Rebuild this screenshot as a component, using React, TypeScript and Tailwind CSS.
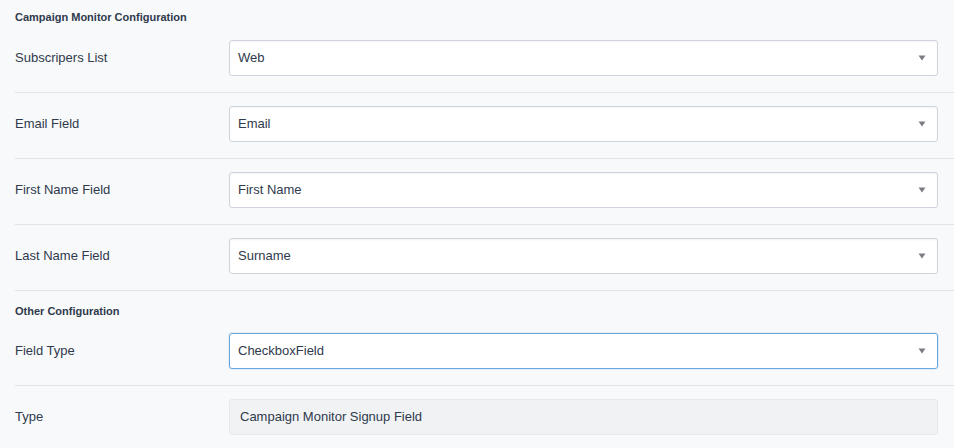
import React from 'react';

function Caret() {
  return (
    <svg width="8" height="6" viewBox="0 0 8 6" className="absolute right-[11px] top-1/2 -translate-y-1/2">
      <path d="M0.5 0.5h7L4 5.5z" fill="#7a7d82" />
    </svg>
  );
}

function SelectBox({ value, focused }: { value: string; focused?: boolean }) {
  return (
    <div
      className={
        'relative flex h-[36px] flex-1 items-center rounded-[3px] border bg-white pl-[8px] text-[13px] text-[#2f3a4c] ' +
        (focused
          ? 'border-[#6aa7e0] shadow-[0_0_0_1px_rgba(106,167,224,0.15)]'
          : 'border-[#cfd4dc] shadow-[inset_0_1px_2px_rgba(0,0,0,0.05)]')
      }
    >
      {value}
      <Caret />
    </div>
  );
}

function Row({ label, children, last }: { label: string; children: React.ReactNode; last?: boolean }) {
  return (
    <div className={'ml-[15px] flex items-center pb-[16px] pt-[13px] ' + (last ? '' : 'border-b border-[#dfe3ea]')}>
      <div className="w-[214px] shrink-0 text-[13px] text-[#2f3a4c]">{label}</div>
      <div className="mr-[16px] flex flex-1">{children}</div>
    </div>
  );
}

function Heading({ children }: { children: React.ReactNode }) {
  return <div className="ml-[15px] text-[11px] font-semibold leading-[16px] text-[#2f3a4c]">{children}</div>;
}

export default function App() {
  const fields = [
    { label: 'Subscripers List', value: 'Web' },
    { label: 'Email Field', value: 'Email' },
    { label: 'First Name Field', value: 'First Name' },
    { label: 'Last Name Field', value: 'Surname' },
  ];

  return (
    <div className="h-[448px] w-[954px] overflow-hidden bg-[#f8f9fb] font-['Liberation_Sans',Arial,sans-serif]">
      <div className="pt-[9px]">
        <Heading>Campaign Monitor Configuration</Heading>
      </div>
      <div className="mt-[2px]">
        {fields.map((f) => (
          <Row key={f.label} label={f.label}>
            <SelectBox value={f.value} />
          </Row>
        ))}
      </div>
      <div className="pt-[12px]">
        <Heading>Other Configuration</Heading>
      </div>
      <div className="mt-[1px]">
        <Row label="Field Type">
          <SelectBox value="CheckboxField" focused />
        </Row>
        <Row label="Type" last>
          <div className="flex h-[36px] flex-1 items-center rounded-[3px] border border-[#e6e8eb] bg-[#f1f2f4] pl-[10px] text-[13px] text-[#2f3a4c]">
            Campaign Monitor Signup Field
          </div>
        </Row>
      </div>
    </div>
  );
}
